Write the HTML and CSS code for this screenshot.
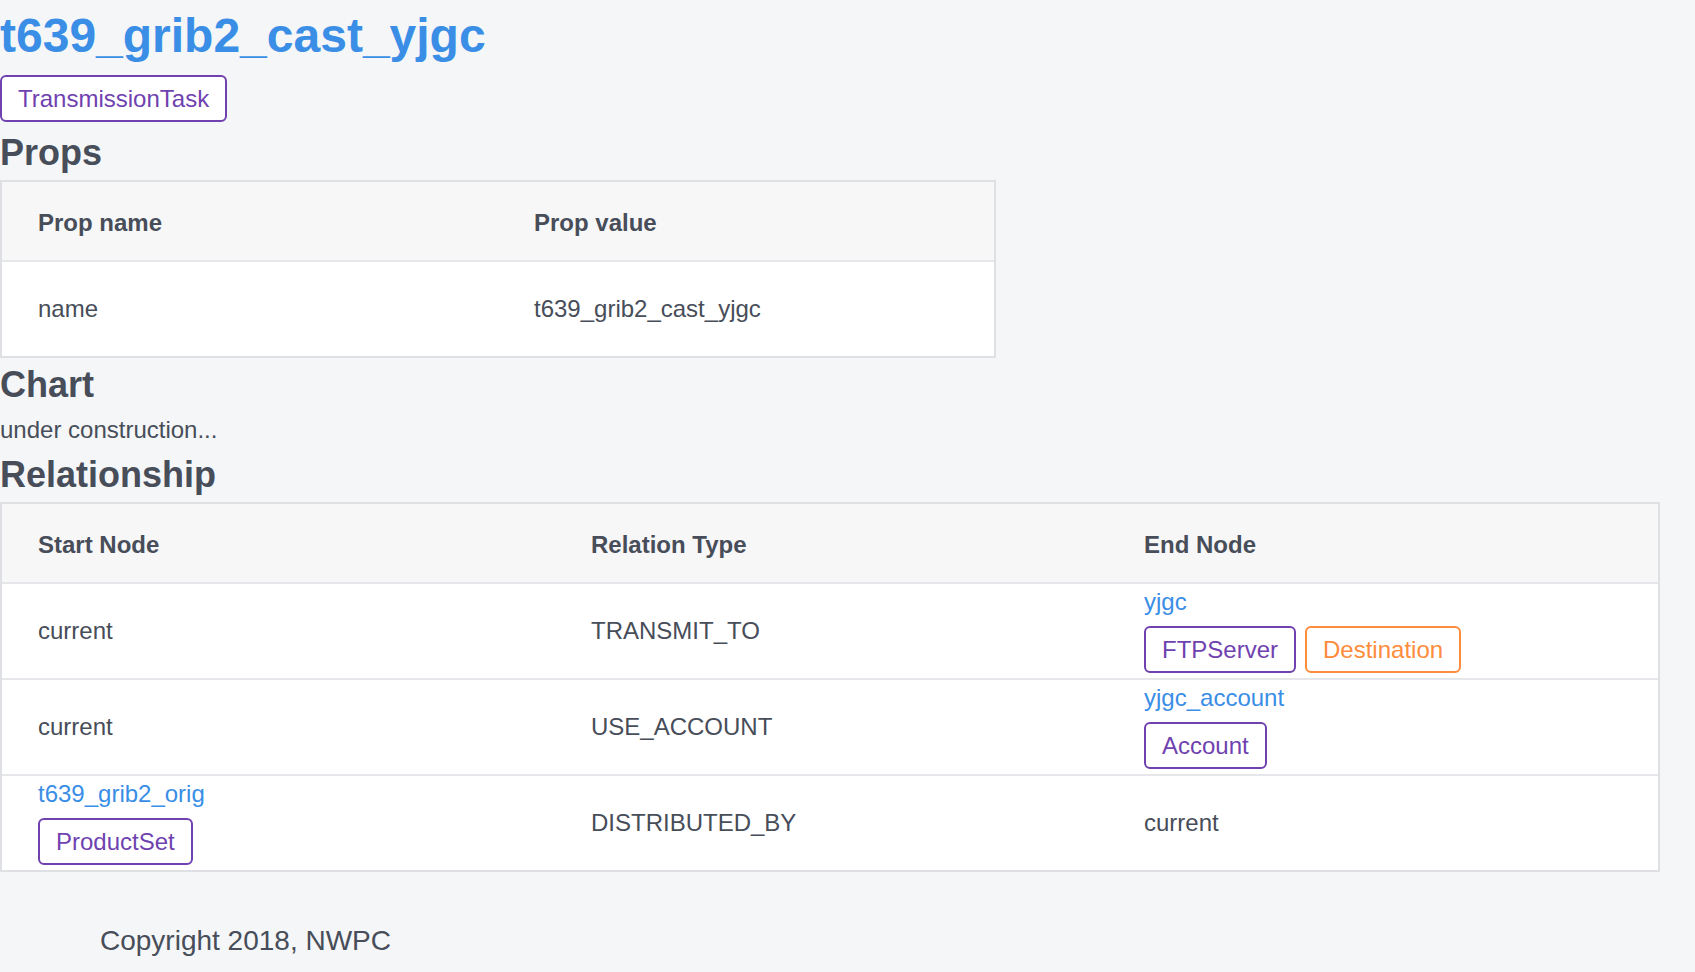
FILE: index.html
```html
<!DOCTYPE html>
<html lang="en">
<head>
<meta charset="utf-8">
<title>t639_grib2_cast_yjgc</title>
<link rel="stylesheet" href="styles.css">
</head>
<body>
<div class="page">
  <h1 class="title">t639_grib2_cast_yjgc</h1>
  <div class="labels top-labels">
    <span class="badge purple">TransmissionTask</span>
  </div>

  <h2 class="section">Props</h2>
  <table class="grid props">
    <thead>
      <tr><th class="half">Prop name</th><th class="half">Prop value</th></tr>
    </thead>
    <tbody>
      <tr class="last"><td>name</td><td>t639_grib2_cast_yjgc</td></tr>
    </tbody>
  </table>

  <h2 class="section">Chart</h2>
  <p class="note">under construction...</p>

  <h2 class="section">Relationship</h2>
  <table class="grid relations">
    <thead>
      <tr><th class="c1">Start Node</th><th class="c2">Relation Type</th><th class="c3">End Node</th></tr>
    </thead>
    <tbody>
      <tr>
        <td>current</td>
        <td>TRANSMIT_TO</td>
        <td>
          <a class="node-link" href="#">yjgc</a>
          <div class="labels">
            <span class="badge purple">FTPServer</span>
            <span class="badge orange">Destination</span>
          </div>
        </td>
      </tr>
      <tr>
        <td>current</td>
        <td>USE_ACCOUNT</td>
        <td>
          <a class="node-link" href="#">yjgc_account</a>
          <div class="labels">
            <span class="badge purple">Account</span>
          </div>
        </td>
      </tr>
      <tr class="last">
        <td>
          <a class="node-link" href="#">t639_grib2_orig</a>
          <div class="labels">
            <span class="badge purple">ProductSet</span>
          </div>
        </td>
        <td>DISTRIBUTED_BY</td>
        <td>current</td>
      </tr>
    </tbody>
  </table>

  <footer class="footer">Copyright 2018, NWPC</footer>
</div>
</body>
</html>
```

FILE: styles.css
```css
html, body {
  margin: 0;
  padding: 0;
}

body {
  background: #f5f6f8;
  font-family: "Liberation Sans", Arial, sans-serif;
  font-size: 24px;
  line-height: 36px;
  color: #474d59;
}

.page {
  width: 1660px;
}

.title {
  margin: 0;
  font-size: 48px;
  line-height: 72px;
  font-weight: bold;
  color: #3a8ee6;
}

.labels {
  display: flex;
  gap: 9px;
  margin: 6px 0 5px;
}

.top-labels {
  margin: 3px 0 4px;
}

.badge {
  display: inline-block;
  background: #ffffff;
  border: 2px solid #6f42b0;
  border-radius: 6px;
  padding: 9px 16px 8px;
  line-height: 26px;
  font-size: 24px;
  color: #6f42b0;
}

.top-labels .badge {
  padding: 9px 16px 8px;
}

.badge.orange {
  border-color: #fd8c3c;
  color: #fd8c3c;
}

.section {
  margin: 0;
  font-size: 36px;
  line-height: 54px;
  font-weight: bold;
  color: #474d59;
}

.note {
  margin: 0;
}

.grid {
  border-collapse: separate;
  border-spacing: 0;
  border: 2px solid #dfe0e4;
  background: #ffffff;
  table-layout: fixed;
}

.props {
  width: 996px;
}

.relations {
  width: 1660px;
}

.grid th,
.grid td {
  box-sizing: border-box;
}

.grid th {
  background: #f7f7f8;
  height: 80px;
  padding: 4px 36px 0;
  text-align: left;
  font-weight: bold;
  vertical-align: middle;
  border-bottom: 2px solid #e6e7ea;
}

.grid td {
  height: 96px;
  padding: 0 36px;
  vertical-align: middle;
  border-bottom: 2px solid #e6e7ea;
}

.grid tr.last td {
  height: 94px;
  border-bottom: none;
}

.half {
  width: 50%;
}

.c1 { width: 553px; }
.c2 { width: 553px; }
.c3 { width: auto; }

.node-link {
  display: block;
  color: #3a8ee6;
  text-decoration: none;
  line-height: 36px;
}

.footer {
  padding: 51px 100px 0;
  font-size: 28px;
  line-height: 36px;
}
```
